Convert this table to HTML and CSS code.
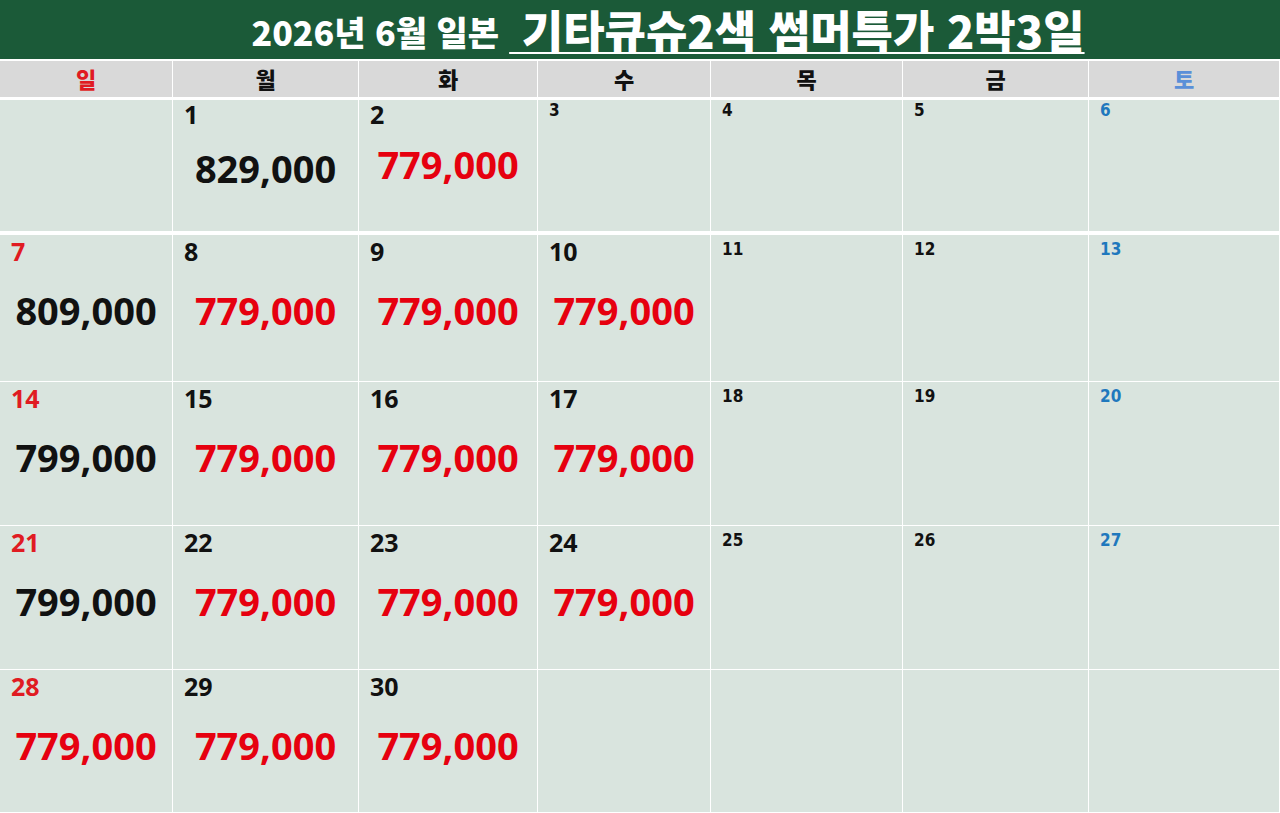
FILE: index.html
```html
<!DOCTYPE html>
<html lang="ko">
<head>
<meta charset="utf-8">
<title>2026년 6월 일본 기타큐슈2색 썸머특가 2박3일</title>
<link rel="stylesheet" href="styles.css">
</head>
<body>
<header class="title">
  <span class="t1">2026년 6월 일본</span>
  <span class="t2">&nbsp;기타큐슈2색 썸머특가 2박3일</span>
</header>
<main class="cal">
  <div class="hd sun">일</div>
  <div class="hd">월</div>
  <div class="hd">화</div>
  <div class="hd">수</div>
  <div class="hd">목</div>
  <div class="hd">금</div>
  <div class="hd sat">토</div>

  <div class="cell r1 first"></div>
  <div class="cell r1 first"><span class="d">1</span><span class="p blk low">829,000</span></div>
  <div class="cell r1 first"><span class="d">2</span><span class="p">779,000</span></div>
  <div class="cell r1 first"><span class="d sm">3</span></div>
  <div class="cell r1 first"><span class="d sm">4</span></div>
  <div class="cell r1 first"><span class="d sm">5</span></div>
  <div class="cell r1 first"><span class="d sm blue">6</span></div>

  <div class="cell"><span class="d red">7</span><span class="p blk">809,000</span></div>
  <div class="cell"><span class="d">8</span><span class="p">779,000</span></div>
  <div class="cell"><span class="d">9</span><span class="p">779,000</span></div>
  <div class="cell"><span class="d">10</span><span class="p">779,000</span></div>
  <div class="cell"><span class="d sm">11</span></div>
  <div class="cell"><span class="d sm">12</span></div>
  <div class="cell"><span class="d sm blue">13</span></div>

  <div class="cell"><span class="d red">14</span><span class="p blk">799,000</span></div>
  <div class="cell"><span class="d">15</span><span class="p">779,000</span></div>
  <div class="cell"><span class="d">16</span><span class="p">779,000</span></div>
  <div class="cell"><span class="d">17</span><span class="p">779,000</span></div>
  <div class="cell"><span class="d sm">18</span></div>
  <div class="cell"><span class="d sm">19</span></div>
  <div class="cell"><span class="d sm blue">20</span></div>

  <div class="cell"><span class="d red">21</span><span class="p blk">799,000</span></div>
  <div class="cell"><span class="d">22</span><span class="p">779,000</span></div>
  <div class="cell"><span class="d">23</span><span class="p">779,000</span></div>
  <div class="cell"><span class="d">24</span><span class="p">779,000</span></div>
  <div class="cell"><span class="d sm">25</span></div>
  <div class="cell"><span class="d sm">26</span></div>
  <div class="cell"><span class="d sm blue">27</span></div>

  <div class="cell"><span class="d red">28</span><span class="p">779,000</span></div>
  <div class="cell"><span class="d">29</span><span class="p">779,000</span></div>
  <div class="cell"><span class="d">30</span><span class="p">779,000</span></div>
  <div class="cell"></div>
  <div class="cell"></div>
  <div class="cell"></div>
  <div class="cell"></div>
</main>
</body>
</html>
```

FILE: styles.css
```css
* { box-sizing: border-box; }
html, body {
  margin: 0;
  padding: 0;
  background: #ffffff;
}
body {
  width: 1280px;
  height: 813px;
  overflow: hidden;
  font-family: "Noto Sans", "Noto Sans CJK KR", sans-serif;
}
.title {
  height: 59px;
  background: #1b5a38;
  color: #ffffff;
  display: flex;
  align-items: center;
  justify-content: center;
  font-family: "Noto Sans CJK KR", sans-serif;
  font-weight: 900;
  white-space: nowrap;
  padding-left: 56px;
}
.t1 {
  font-size: 34px;
  line-height: 44px;
  margin-top: 4px;
}
.t2 {
  font-size: 45px;
  line-height: 52px;
  margin-left: 10px;
  text-decoration: underline;
  text-decoration-thickness: 2px;
  text-underline-offset: 3px;
}
.cal {
  margin-top: 2px;
  display: grid;
  grid-template-columns: 172px 185px 178px 172px 191px 185px 190px;
  grid-template-rows: 38px 134px 146px 143px 143px 142px;
  column-gap: 1px;
  row-gap: 1px;
}
.hd {
  background: #d9d9d9;
  border-bottom: 2px solid #ffffff;
  display: flex;
  align-items: center;
  justify-content: center;
  font-family: "Noto Sans CJK KR", sans-serif;
  font-weight: 900;
  font-size: 22px;
  color: #111111;
  padding-bottom: 2px;
}
.hd.sun { color: #e01b22; }
.hd.sat { color: #5a8fd8; }
.cell {
  background: #d9e4de;
  display: flex;
  flex-direction: column;
  padding: 2px 0 0 11px;
}
.cell.first {
  border-bottom: 3px solid #ffffff;
  padding-top: 0;
}
.d {
  font-family: "Noto Sans", sans-serif;
  font-weight: 700;
  font-size: 25px;
  line-height: 28px;
  color: #111111;
}
.d.sm {
  font-family: "DejaVu Sans Condensed", "DejaVu Sans", sans-serif;
  font-stretch: condensed;
  font-size: 17px;
  line-height: 20px;
  padding-top: 2px;
}
.r1 .d.sm { padding-top: 0; }
.d.red { color: #e01b22; }
.d.blue { color: #1f78bd; }
.p {
  margin-top: 25px;
  margin-left: -11px;
  text-align: center;
  font-family: "Noto Sans", sans-serif;
  font-weight: 700;
  font-size: 38px;
  line-height: 40px;
  color: #e6000f;
}
.r1 .p { margin-top: 16px; }
.r1 .p.low { margin-top: 20px; }
.p.blk { color: #111111; }
```
